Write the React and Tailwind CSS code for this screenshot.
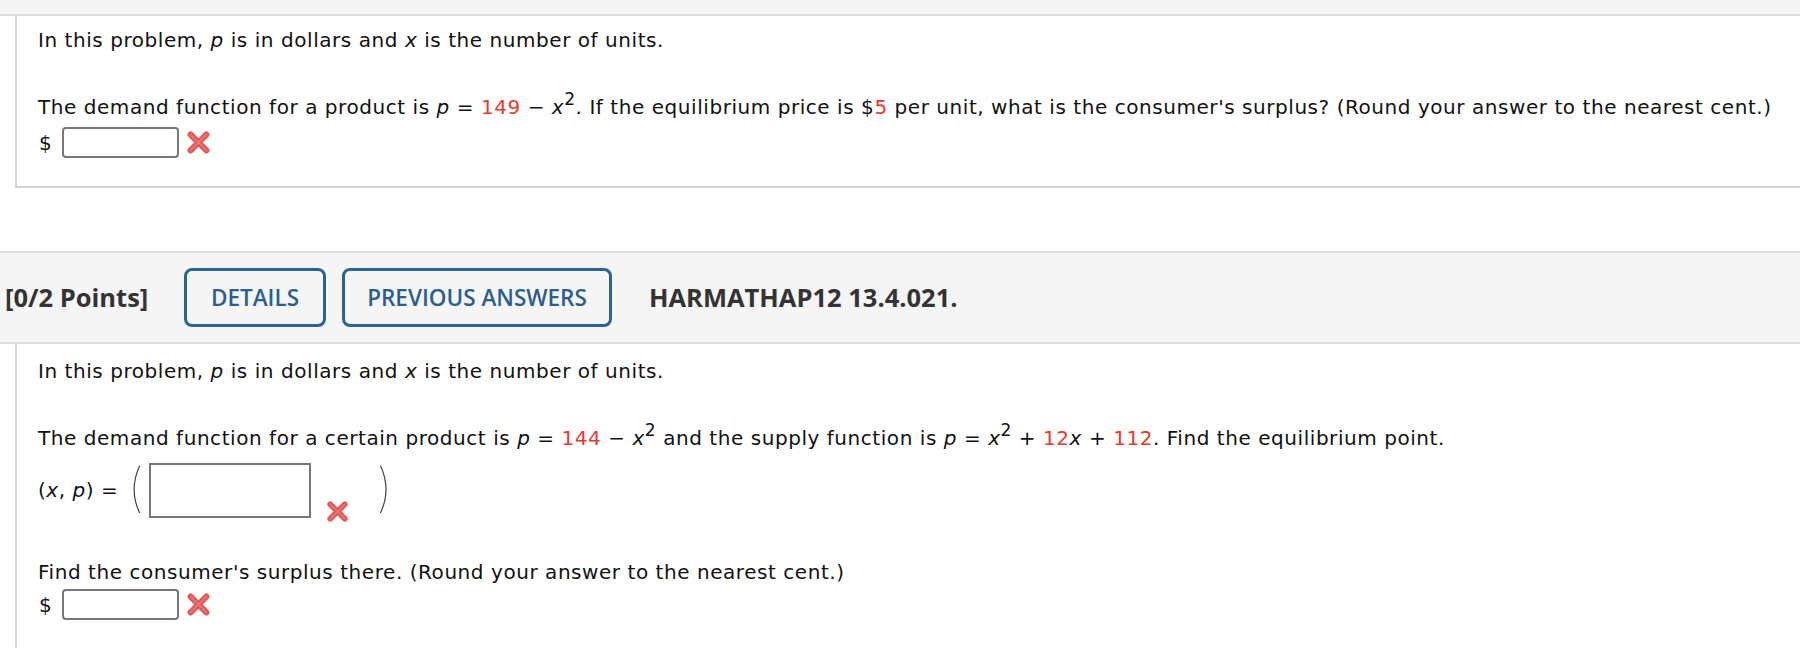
import React from 'react'

const RedX = ({ className }) => (
  <svg viewBox="0 0 24 24" className={className}>
    <path d="M5 5 L19 19 M19 5 L5 19" stroke="#e35858" strokeWidth="5.5" strokeLinecap="round" />
    <path d="M5 5 L19 19 M19 5 L5 19" stroke="#f08a8a" strokeWidth="1.5" strokeLinecap="round" opacity="0.6" />
  </svg>
)

const Sq = ({ children }) => (
  <span className="relative -top-[9px] text-[17px] leading-none">{children}</span>
)

const Red = ({ children }) => <span className="text-[#e8392e]">{children}</span>

const DollarRow = () => (
  <div className="flex items-center h-[31px]">
    <span className="w-[24px] pl-[1px]">$</span>
    <div className="w-[117px] h-[31px] border-2 border-[#777] rounded-[4px] bg-white" />
    <RedX className="w-[27px] h-[27px] ml-[6px]" />
  </div>
)

export default function App() {
  return (
    <div className="w-full h-[648px] overflow-hidden bg-white text-[20px] tracking-[0.55px] text-[#111] font-['DejaVu_Sans',Verdana,sans-serif]">
      {/* top */}
      <div className="h-[16px] bg-[#f5f5f5] border-b-2 border-[#dcdcdc]" />
      <div className="ml-[15px] h-[172px] border-l-2 border-b-2 border-[#d4d4d4] pl-[21px] pt-[12px]">
        <p className="leading-[24px]">
          In this problem, <i>p</i> is in dollars and <i>x</i> is the number of units.
        </p>
        <p className="leading-[24px] mt-[43px]">
          The demand function for a product is <i>p</i> = <Red>149</Red> − <i>x</i><Sq>2</Sq>. If the equilibrium price is $<Red>5</Red> per unit, what is the consumer's surplus? (Round your answer to the nearest cent.)
        </p>
        <div className="mt-[8px]">
          <DollarRow />
        </div>
      </div>

      {/* question header */}
      <div className="mt-[63px] h-[93px] bg-[#f5f5f5] border-t-2 border-b-2 border-[#dedede] flex items-center font-['Open_Sans',sans-serif] tracking-normal pl-[5px]">
        <span className="text-[25.5px] font-bold text-[#333] w-[179px]">[0/2 Points]</span>
        <div className="w-[142px] h-[59px] border-[3px] border-[#2a6496] rounded-[8px] flex items-center justify-center text-[22.5px] font-semibold text-[#2a5e90]">
          DETAILS
        </div>
        <div className="ml-[16px] w-[270px] h-[59px] border-[3px] border-[#2a6496] rounded-[8px] flex items-center justify-center text-[22.5px] font-semibold text-[#2a5e90]">
          PREVIOUS ANSWERS
        </div>
        <span className="ml-[37px] text-[25.5px] font-bold text-[#333]">HARMATHAP12 13.4.021.</span>
      </div>

      <div className="ml-[15px] h-[320px] border-l-2 border-[#d4d4d4] pl-[21px] pt-[15px]">
        <p className="leading-[24px]">
          In this problem, <i>p</i> is in dollars and <i>x</i> is the number of units.
        </p>
        <p className="leading-[24px] mt-[43px]">
          The demand function for a certain product is <i>p</i> = <Red>144</Red> − <i>x</i><Sq>2</Sq> and the supply function is <i>p</i> = <i>x</i><Sq>2</Sq> + <Red>12</Red><i>x</i> + <Red>112</Red>. Find the equilibrium point.
        </p>
        <div className="flex items-end mt-[8px] h-[64px]">
          <span className="self-center">(<i>x</i>, <i>p</i>) =</span>
          <span className="self-center ml-[9px] text-[52px] leading-none font-['Inter',sans-serif] font-thin text-[#444] -mt-[4px]">(</span>
          <div className="self-center ml-[5px] w-[162px] h-[55px] border-2 border-[#777] bg-white" />
          <RedX className="w-[25px] h-[25px] ml-[14px] mb-[-2px]" />
          <span className="self-center ml-[26px] text-[52px] leading-none font-['Inter',sans-serif] font-thin text-[#444] -mt-[4px]">)</span>
        </div>
        <p className="leading-[24px] mt-[38px]">
          Find the consumer's surplus there. (Round your answer to the nearest cent.)
        </p>
        <div className="mt-[5px]">
          <DollarRow />
        </div>
      </div>
    </div>
  )
}
